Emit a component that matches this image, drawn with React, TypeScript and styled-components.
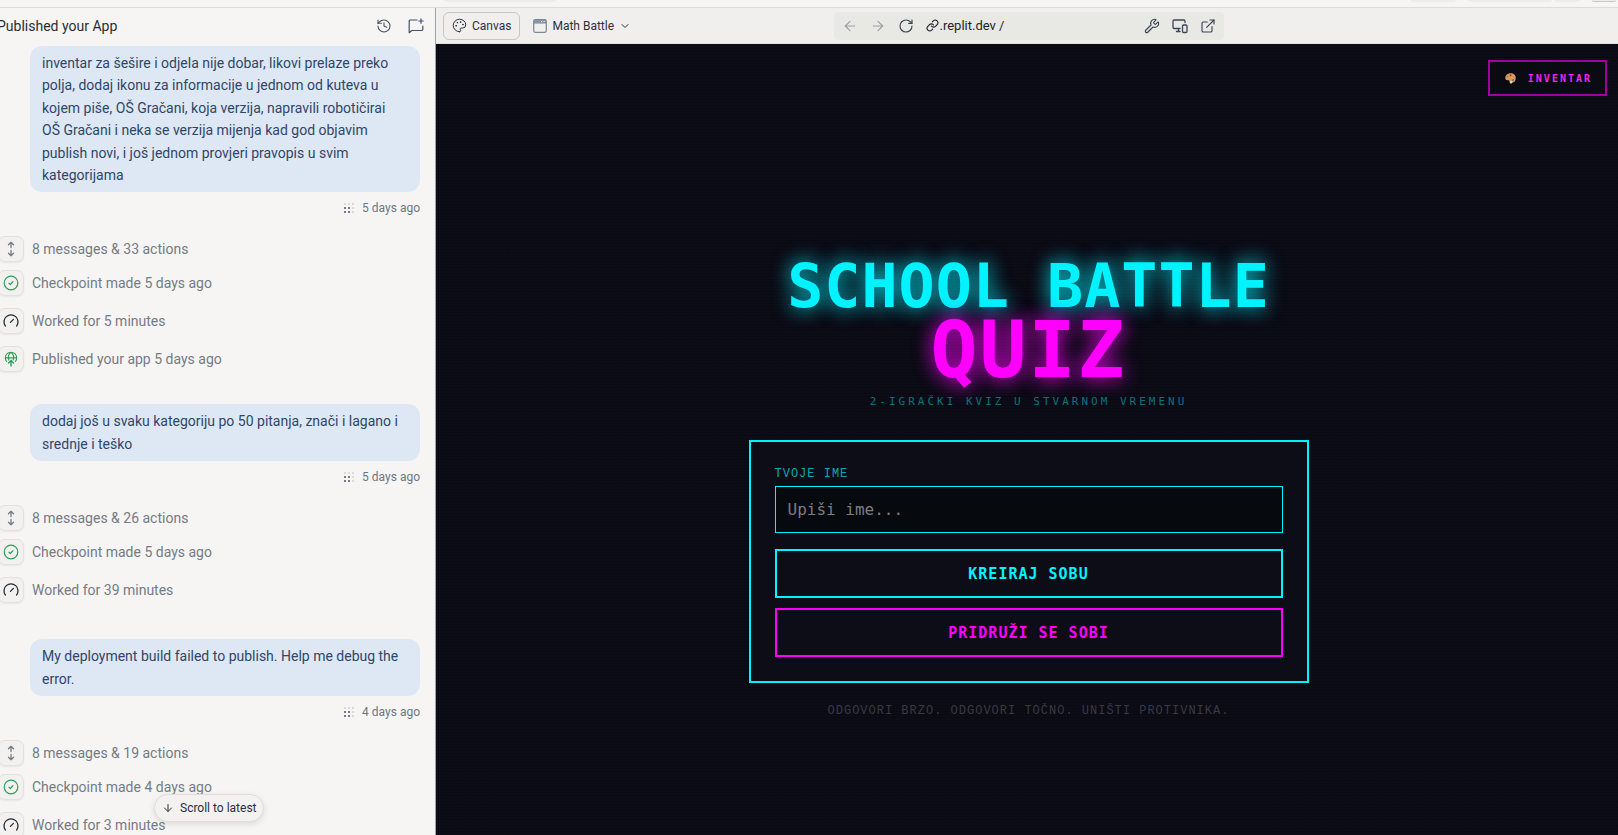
import React from "react";
import styled, { createGlobalStyle, css } from "styled-components";
import {
  Palette, ChevronDown, ArrowLeft, ArrowRight, RotateCw, Link, Wrench, ExternalLink,
  History, ArrowDown,
} from "lucide-react";

const Global = createGlobalStyle`
  *, *::before, *::after { box-sizing: border-box; }
  html, body { margin: 0; height: 100%; overflow: hidden; }
  body { background: #f6f5f3; font-family: "Roboto", "Liberation Sans", sans-serif; color: #2b3245; }
  #root { height: 100%; }
  button, input { font: inherit; color: inherit; }
  button { cursor: pointer; }
`;

const MONO = `"DejaVu Sans Mono", monospace`;

const Shell = styled.div`
  display: flex;
  flex-direction: column;
  height: 100vh;
`;
const TabStrip = styled.header`
  height: 8px;
  flex: none;
  display: flex;
  justify-content: space-between;
  padding: 0 2px 0 444px;
  border-bottom: 1px solid #dddbd5;
`;
const TabEnds = styled.div<{ $gap: number }>`
  display: flex;
  gap: ${(p) => p.$gap}px;
`;
const TabEnd = styled.span<{ $w: number; $line?: boolean }>`
  width: ${(p) => p.$w}px;
  height: 2px;
  background: #eeecea;
  border-radius: 0 0 6px 6px;
  ${(p) => p.$line && css`border-bottom: 1px solid #c9c8c4;`}
`;
const Body = styled.div`
  flex: 1;
  min-height: 0;
  display: flex;
`;

const Sidebar = styled.aside`
  position: relative;
  flex: none;
  width: 435px;
  overflow: hidden;
  display: flex;
  flex-direction: column;
`;
const SideHead = styled.div`
  flex: none;
  display: flex;
  align-items: center;
  height: 38px;
  margin-left: -3px;
  padding: 0 3px 2px 0;
`;
const SideTitle = styled.h1`
  flex: 1;
  margin: 0;
  font-size: 14px;
  line-height: 20px;
  font-weight: 400;
  color: #2b2d36;
`;
const HeadButton = styled.button`
  display: flex;
  padding: 8px;
  border: 0;
  background: none;
  color: #46506a;
`;
const Thread = styled.div`
  flex: 1;
  min-height: 0;
  overflow: hidden;
  margin-left: -2px;
`;
const Group = styled.section<{ $published: boolean }>`
  padding: 0 15px ${(p) => (p.$published ? 32 : 36)}px 0;
`;
const Bubble = styled.p`
  margin: 0 0 0 32px;
  padding: 6px 16px 6px 12px;
  border-radius: 12px;
  background: #dee8f5;
  color: #2f4668;
  font-size: 14px;
  line-height: 1.6;
`;
const Stamp = styled.div`
  display: flex;
  justify-content: flex-end;
  align-items: center;
  gap: 8px;
  margin-top: 6px;
  font-size: 12px;
  line-height: 20px;
  color: #6f7580;
`;
const Events = styled.ul`
  list-style: none;
  margin: 18px 0 0;
  padding: 0;
`;
const EventRow = styled.li<{ $tight?: boolean }>`
  display: flex;
  align-items: center;
  gap: 8px;
  height: 26px;
  margin-top: ${(p) => (p.$tight ? 8 : 12)}px;
  font-size: 14px;
  line-height: 20px;
  color: #757b85;
`;
const EventIcon = styled.span<{ $color: string }>`
  display: flex;
  align-items: center;
  justify-content: center;
  width: 26px;
  height: 26px;
  border: 1px solid #e3e1da;
  border-radius: 7px;
  background: #f2f1ef;
  box-shadow: 0 1px 2px #00000010;
  color: ${(p) => p.$color};
`;
const Latest = styled.button`
  position: absolute;
  left: 154px;
  bottom: 13px;
  display: flex;
  align-items: center;
  gap: 6px;
  height: 28px;
  padding: 0 6px 0 7px;
  border: 1px solid #dfddd5;
  border-radius: 14px;
  background: #f3f2f0;
  box-shadow: 0 2px 6px #0000001c;
  font-size: 12px;
  color: #2b3038;
`;

const Workspace = styled.main`
  flex: 1;
  min-width: 0;
  display: flex;
  flex-direction: column;
  border-left: 1px solid #9aa4ab;
`;
const Toolbar = styled.div`
  flex: none;
  display: grid;
  grid-template-columns: 1fr 390px 1fr;
  align-items: center;
  height: 36px;
  padding: 0 4px 0 7px;
  background: #f0efed;
  border-bottom: 1px solid #e2e1dd;
`;
const ToolGroup = styled.div`
  display: flex;
  align-items: center;
  gap: 4px;
`;
const ToolButton = styled.button<{ $outlined?: boolean }>`
  display: flex;
  align-items: center;
  gap: 5px;
  height: 28px;
  padding: 0 8px;
  border: 1px solid ${(p) => (p.$outlined ? "#c6c6c4" : "transparent")};
  border-radius: 6px;
  background: none;
  font-size: 12px;
  color: #2b303c;
`;
const AddressBar = styled.div`
  display: flex;
  align-items: center;
  gap: 12px;
  height: 28px;
  padding: 0 8px;
  border-radius: 4px;
  background: #e8e8e4;
`;
const BarButton = styled.button<{ $dim?: boolean }>`
  display: flex;
  padding: 0;
  border: 0;
  background: none;
  color: ${(p) => (p.$dim ? "#9a9fa6" : "#3b4354")};
`;
const Address = styled.span`
  flex: 1;
  display: flex;
  align-items: center;
  gap: 1px;
  font-size: 13px;
  color: #1c1f2a;
`;

const Preview = styled.div`
  flex: 1;
  min-height: 0;
  margin-right: -5px;
  padding: 16px 16px 16px 14px;
  display: flex;
  flex-direction: column;
  align-items: center;
  background:
    repeating-linear-gradient(0deg, #00000038 0 1px, transparent 1px 3px),
    repeating-linear-gradient(90deg, #3010100c 0 1px, transparent 1px 3px),
    #0c0c17;
  font-family: ${MONO};
`;
const Inventory = styled.button`
  align-self: flex-end;
  display: flex;
  align-items: center;
  gap: 12px;
  height: 36px;
  padding: 0 13px 0 15px;
  border: 2px solid #a000a0;
  background: #0a0a12;
  color: #f322f3;
  font-size: 10px;
  font-weight: 700;
  letter-spacing: 2px;
`;
const Title = styled.h2`
  margin: 160px 0 0;
  display: flex;
  flex-direction: column;
  align-items: center;
  font-size: 60px;
  line-height: 60px;
  letter-spacing: 1px;
  color: #00f3ff;
  text-shadow: 0 0 20px #00f3ff90, 0 0 20px #00f3ff80;
`;
const TitleAccent = styled.span`
  font-size: 78px;
  line-height: 68px;
  letter-spacing: 2px;
  color: #ff00ff;
  text-shadow: 0 0 20px #ff00ff90, 0 0 20px #ff00ff80;
`;
const Tagline = styled.p`
  margin: 10px 0 0;
  font-size: 11px;
  line-height: 16px;
  letter-spacing: 3px;
  color: #08737c;
`;
const Card = styled.form`
  width: 100%;
  max-width: 560px;
  margin-top: 30px;
  padding: 24px;
  display: flex;
  flex-direction: column;
  border: 2px solid #00f3ff;
  background: #0d0d18;
`;
const Label = styled.label`
  margin-bottom: 4px;
  font-family: "Liberation Mono", monospace;
  font-size: 12px;
  line-height: 16px;
  letter-spacing: 1px;
  color: #08a8b2;
`;
const NameInput = styled.input`
  height: 47px;
  margin-bottom: 16px;
  padding: 0 12px;
  border: 1px solid #00f3ff;
  border-radius: 0;
  background: #06090d;
  color: #00f3ff;
  font-size: 16px;
  &::placeholder { color: #7c7c82; opacity: 1; }
`;
const Action = styled.button<{ $color: string }>`
  height: 49px;
  border: 2px solid ${(p) => p.$color};
  background: none;
  color: ${(p) => p.$color};
  font-size: 15px;
  font-weight: 700;
  letter-spacing: 1px;
  & + & { margin-top: 10px; }
`;
const Motto = styled.p`
  margin: 20px 0 0;
  font-family: "Liberation Mono", monospace;
  font-size: 12px;
  line-height: 16px;
  letter-spacing: 1px;
  color: #3a3a42;
`;

const svgProps = { fill: "none", stroke: "currentColor", strokeLinecap: "round", strokeLinejoin: "round" } as const;

const ExpandIcon = () => (
  <svg width="16" height="16" viewBox="0 0 16 16" {...svgProps} strokeWidth="1.3">
    <path d="M8 1.500v5M8 9.500v5M5.500 3.700 8 1.300l2.500 2.400M5.500 12.300 8 14.700l2.500-2.400" />
  </svg>
);
const CheckIcon = () => (
  <svg width="16" height="16" viewBox="0 0 16 16" {...svgProps} strokeWidth="1.2">
    <circle cx="8" cy="8" r="6.800" /><path d="m6 8.200 1.400 1.300L10 6.600" />
  </svg>
);
const GaugeIcon = () => (
  <svg width="16" height="16" viewBox="0 0 16 16" {...svgProps} strokeWidth="1.3">
    <path d="M2.400 13A7 7 0 1 1 13.600 13M7.400 9.400l3-3" />
  </svg>
);
const PublishIcon = () => (
  <svg width="16" height="16" viewBox="0 0 16 16" {...svgProps} strokeWidth="1.1">
    <path d="M3.600 10.500A5.700 5.700 0 1 1 12.400 10.500M2.300 6.900h11.400M5.800 9C4.800 6 5.800 2.800 8 1.200c2.200 1.600 3.200 4.800 2.200 7.800" />
    <path d="M8 15V9.800M5.500 12 8 9.600l2.500 2.400" strokeWidth="1.400" />
  </svg>
);
const ChatPlusIcon = () => (
  <svg width="16" height="16" viewBox="0 0 16 16" {...svgProps} strokeWidth="1.200">
    <path d="M9 2H2.200a1 1 0 0 0-1 1v11.700l2.600-2.200h10a1 1 0 0 0 1-1V8M13 .8v4.400M10.800 3h4.400" />
  </svg>
);
const WindowIcon = () => (
  <svg width="14" height="14" viewBox="0 0 14 14" {...svgProps} stroke="#7d8796" strokeWidth="1.200">
    <rect x=".7" y=".7" width="12.600" height="12.600" rx="1.500" />
    <path d="M1 1h12v3.600H1z" fill="#8b94a3" stroke="none" /><path d="M8.500 2.500h.1M11 2.500h.1" stroke="#fff" />
  </svg>
);
const DevicesIcon = () => (
  <svg width="16" height="16" viewBox="0 0 16 16" {...svgProps} strokeWidth="1.300">
    <path d="M8 10.500H2.200a1.200 1.200 0 0 1-1.200-1.200V3.200A1.200 1.200 0 0 1 2.200 2h9.600A1.200 1.200 0 0 1 13 3.200V4.500M4.500 13.500H8M6.500 10.500v3" />
    <rect x="10.500" y="7" width="4.500" height="7.500" rx="1.200" />
  </svg>
);
const DotsIcon = () => (
  <svg width="10" height="10" viewBox="0 0 10 10">
    {[0, 1, 2].map((r) => [0, 1, 2].map((c) => (
      <rect key={`${r}${c}`} x={c * 4} y={r * 4} width="2" height="2" rx="1" fill={r > 0 && c < 2 ? "#4a5162" : "#d0d0cf"} />
    )))}
  </svg>
);
const PaintIcon = () => (
  <svg width="11" height="11" viewBox="0 0 11 11">
    <path d="M5.300.3C8.600.2 10.800 2 10.700 4.800c.2 2.800-1 4.200-2.900 4.700-.8.200-.6 1.200-1.700 1.200-1.300 0-1.600-1.200-1.500-2 .1-1-.5-1.500-1.500-1.500C1.600 7.300.4 7 .3 5 .3 2.300 2.500.4 5.300.3z" fill="#d99b5c" />
    <circle cx="5.500" cy="2.300" r="1" fill="#d2222d" /><circle cx="2.500" cy="3.600" r=".9" fill="#5d9e3a" />
    <circle cx="8" cy="7" r="1.100" fill="#4b7f9e" /><circle cx="6.100" cy="8.900" r=".8" fill="#fff" />
  </svg>
);

const icons = {
  expand: { el: <ExpandIcon />, color: "#757b85" },
  check: { el: <CheckIcon />, color: "#2f9e5b" },
  gauge: { el: <GaugeIcon />, color: "#262b36" },
  publish: { el: <PublishIcon />, color: "#2f9e5b" },
};
type EventItem = { icon: keyof typeof icons; text: string };

const thread: { message: string; when: string; events: EventItem[] }[] = [
  {
    message: "inventar za šešire i odjela nije dobar, likovi prelaze preko polja, dodaj ikonu za informacije u jednom od kuteva u kojem piše, OŠ Gračani, koja verzija, napravili robotičirai OŠ Gračani i neka se verzija mijenja kad god objavim publish novi, i još jednom provjeri pravopis u svim kategorijama",
    when: "5 days ago",
    events: [
      { icon: "expand", text: "8 messages & 33 actions" },
      { icon: "check", text: "Checkpoint made 5 days ago" },
      { icon: "gauge", text: "Worked for 5 minutes" },
      { icon: "publish", text: "Published your app 5 days ago" },
    ],
  },
  {
    message: "dodaj još u svaku kategoriju po 50 pitanja, znači i lagano i srednje i teško",
    when: "5 days ago",
    events: [
      { icon: "expand", text: "8 messages & 26 actions" },
      { icon: "check", text: "Checkpoint made 5 days ago" },
      { icon: "gauge", text: "Worked for 39 minutes" },
    ],
  },
  {
    message: "My deployment build failed to publish. Help me debug the error.",
    when: "4 days ago",
    events: [
      { icon: "expand", text: "8 messages & 19 actions" },
      { icon: "check", text: "Checkpoint made 4 days ago" },
      { icon: "gauge", text: "Worked for 3 minutes" },
    ],
  },
];

export default function App() {
  return (
    <Shell>
      <Global />
      <TabStrip>
        <TabEnd $w={113} />
        <TabEnds $gap={12}>
          <TabEnd $w={46} />
          <TabEnds $gap={2}>
            <TabEnd $w={84} />
            <TabEnd $w={26} />
          </TabEnds>
          <TabEnd $w={24} $line />
        </TabEnds>
      </TabStrip>
      <Body>
        <Sidebar>
          <SideHead>
            <SideTitle>Published your App</SideTitle>
            <HeadButton aria-label="History"><History size={16} strokeWidth={1.600} /></HeadButton>
            <HeadButton aria-label="New chat"><ChatPlusIcon /></HeadButton>
          </SideHead>
          <Thread>
            {thread.map((g) => (
              <Group key={g.message} $published={g.events.some((e) => e.icon === "publish")}>
                <Bubble>{g.message}</Bubble>
                <Stamp><DotsIcon />{g.when}</Stamp>
                <Events>
                  {g.events.map((e) => (
                    <EventRow key={e.text} $tight={e.icon === "check"}>
                      <EventIcon $color={icons[e.icon].color}>{icons[e.icon].el}</EventIcon>
                      {e.text}
                    </EventRow>
                  ))}
                </Events>
              </Group>
            ))}
          </Thread>
          <Latest><ArrowDown size={12} />Scroll to latest</Latest>
        </Sidebar>
        <Workspace>
          <Toolbar>
            <ToolGroup>
              <ToolButton $outlined><Palette size={15} strokeWidth={1.600} />Canvas</ToolButton>
              <ToolButton><WindowIcon />Math Battle<ChevronDown size={12} /></ToolButton>
            </ToolGroup>
            <AddressBar>
              <BarButton $dim aria-label="Back"><ArrowLeft size={16} strokeWidth={1.600} /></BarButton>
              <BarButton $dim aria-label="Forward"><ArrowRight size={16} strokeWidth={1.600} /></BarButton>
              <BarButton aria-label="Reload"><RotateCw size={16} strokeWidth={1.700} /></BarButton>
              <Address><Link size={13} />.replit.dev /</Address>
              <BarButton aria-label="Developer tools"><Wrench size={16} strokeWidth={1.700} /></BarButton>
              <BarButton aria-label="Device size"><DevicesIcon /></BarButton>
              <BarButton aria-label="Open in new tab"><ExternalLink size={16} strokeWidth={1.700} /></BarButton>
            </AddressBar>
          </Toolbar>
          <Preview>
            <Inventory><PaintIcon />INVENTAR</Inventory>
            <Title>SCHOOL BATTLE<TitleAccent>QUIZ</TitleAccent></Title>
            <Tagline>2-IGRAČKI KVIZ U STVARNOM VREMENU</Tagline>
            <Card onSubmit={(e) => e.preventDefault()}>
              <Label htmlFor="player-name">TVOJE IME</Label>
              <NameInput id="player-name" placeholder="Upiši ime..." />
              <Action type="button" $color="#00f3ff">KREIRAJ SOBU</Action>
              <Action type="button" $color="#ff00ff">PRIDRUŽI SE SOBI</Action>
            </Card>
            <Motto>ODGOVORI BRZO. ODGOVORI TOČNO. UNIŠTI PROTIVNIKA.</Motto>
          </Preview>
        </Workspace>
      </Body>
    </Shell>
  );
}
